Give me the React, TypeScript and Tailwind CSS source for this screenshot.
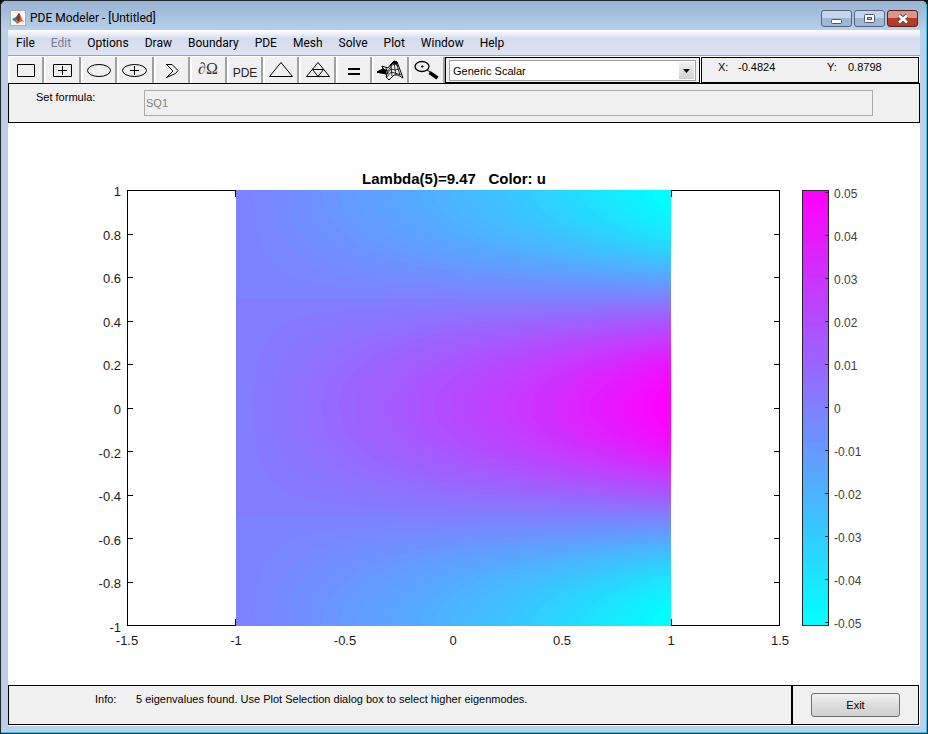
import React, { useState } from 'react';

const LEVELS = 64;
const GROWTH = 0.63;
const PLOT = 435;

const menus = ['File', 'Edit', 'Options', 'Draw', 'Boundary', 'PDE', 'Mesh', 'Solve', 'Plot', 'Window', 'Help'];
const yTicks = ['1', '0.8', '0.6', '0.4', '0.2', '0', '-0.2', '-0.4', '-0.6', '-0.8', '-1'];
const xTicks = ['-1.5', '-1', '-0.5', '0', '0.5', '1', '1.5'];
const barTicks = ['0.05', '0.04', '0.03', '0.02', '0.01', '0', '-0.01', '-0.02', '-0.03', '-0.04', '-0.05'];

// "cool" colormap, cyan to magenta
const cool = (i: number) => {
  const t = i / (LEVELS - 1);
  return `rgb(${Math.round(255 * t)},${Math.round(255 * (1 - t))},255)`;
};

// x pixel where the eigenmode reaches the given amplitude
const contourX = (amplitude: number) => {
  const x = Math.asinh(amplitude * Math.sinh(2 * GROWTH)) / GROWTH;
  return (x / 2) * PLOT;
};

// region of one lobe where |u| >= level, closed along the right edge
const lobePath = (level: number, centre: number) => {
  const half = (Math.acos(level) / Math.PI) * (PLOT / 2);
  const points: string[] = [];
  const steps = 80;
  for (let i = 0; i <= steps; i++) {
    const d = -half + (2 * half * i) / steps;
    const g = Math.cos((d / (PLOT / 2)) * Math.PI);
    const x = g <= 0 ? PLOT : contourX(Math.min(1, level / g));
    points.push(`${x.toFixed(2)},${(centre + d).toFixed(2)}`);
  }
  return `M${PLOT},${centre - half}L${points.join('L')}L${PLOT},${centre + half}Z`;
};

const Surface = () => {
  const half = LEVELS / 2;
  const steps = Array.from({ length: half - 1 }, (_, i) => i + 1);
  return (
    <g transform="translate(109 0)">
      <clipPath id="domain">
        <rect width={PLOT} height={PLOT + 1} />
      </clipPath>
      <g clipPath="url(#domain)">
        <rect width={PLOT} height={PLOT + 1} fill={cool(half - 1)} />
        <rect y={PLOT / 4} width={PLOT} height={PLOT / 2} fill={cool(half)} />
        {steps.map((n) => (
          <g key={n}>
            <path d={lobePath(n / half, 0)} fill={cool(half - 1 - n)} />
            <path d={lobePath(n / half, PLOT + 1)} fill={cool(half - 1 - n)} />
            <path d={lobePath(n / half, PLOT / 2)} fill={cool(half + n)} />
          </g>
        ))}
      </g>
    </g>
  );
};

const Plot = () => (
  <svg
    viewBox="0 0 912 562"
    className="w-full h-auto shrink-0"
    fontFamily='"Liberation Sans", Arial, sans-serif'
    role="img"
    aria-label="Lambda(5)=9.47 Color: u"
  >
    <text x="446" y="61" textAnchor="middle" fontSize="15" fontWeight="bold" style={{ whiteSpace: 'pre' }}>
      {'Lambda(5)=9.47   Color: u'}
    </text>
    <g transform="translate(119 67)">
      <g stroke="#000" fill="none" shapeRendering="crispEdges">
        <rect x="0.5" y="0.5" width="652" height="435" />
        {yTicks.map((t, i) => (
          <path key={t} d={`M0 ${Math.round(i * 43.5) + 0.5}h6M647 ${Math.round(i * 43.5) + 0.5}h6`} />
        ))}
      </g>
      <Surface />
      <path d="M108.5 0v7M108.5 429v7M544.5 0v7M544.5 429v7" stroke="#000" shapeRendering="crispEdges" />
      <g fontSize="13" fill="#1a1a1a">
        {yTicks.map((t, i) => (
          <text key={t} x="-6" y={Math.round(i * 43.6) + 6} textAnchor="end">{t}</text>
        ))}
        {xTicks.map((t, i) => (
          <text key={t} x={Math.round(i * 108.8)} y="455" textAnchor="middle">{t}</text>
        ))}
      </g>
    </g>
    <g transform="translate(794 67)">
      {Array.from({ length: LEVELS }, (_, i) => (
        <rect key={i} y={(i * 435) / LEVELS} width="26" height={i === LEVELS - 1 ? 7 : 8} fill={cool(LEVELS - 1 - i)} />
      ))}
      <rect x="0.5" y="0.5" width="26" height="435" fill="none" stroke="#262626" shapeRendering="crispEdges" />
      {barTicks.map((t, i) => (
        <g key={t}>
          <path d={`M23 ${2 + i * 43 + 0.5}h4`} stroke="#262626" shapeRendering="crispEdges" />
          <text x="32" y={8 + i * 43} fontSize="12" fill="#404040">{t}</text>
        </g>
      ))}
    </g>
  </svg>
);

const tools = [
  { name: 'Rectangle', icon: <path d="M7.5 9.5h17v12h-17z" /> },
  { name: 'Centered rectangle', icon: <path d="M6.5 9.5h18v12h-18zM11 15.5h9M15.5 11v9" /> },
  { name: 'Ellipse', icon: <ellipse cx="16" cy="15.5" rx="11.5" ry="6" /> },
  {
    name: 'Centered ellipse',
    icon: (
      <>
        <ellipse cx="15.5" cy="15.5" rx="12" ry="6" />
        <path d="M11 15.5h9M15.5 11v9" />
      </>
    ),
  },
  { name: 'Polygon', icon: <path d="M10.5 9.5H16l6 6-2.5 3-9 4L17 16z" /> },
  {
    name: 'Boundary mode',
    icon: (
      <text x="16" y="19" textAnchor="middle" fontSize="16" fontFamily='"Liberation Serif", serif' fill="#333" stroke="none">
        <tspan fontStyle="italic">∂</tspan>Ω
      </text>
    ),
  },
  {
    name: 'PDE specification',
    icon: (
      <text x="16" y="22" textAnchor="middle" fontSize="12" fill="#222" stroke="none">PDE</text>
    ),
  },
  { name: 'Initialize mesh', icon: <path d="M4.5 21.5h23L16 7.5z" /> },
  { name: 'Refine mesh', icon: <path d="M4.5 21.5h23L16 7.5zM10.5 14.5h11L16 21.5z" /> },
  { name: 'Solve PDE', icon: <path d="M10 14h12M10 19h12" strokeWidth="2" /> },
  {
    name: 'Plot solution',
    icon: (
      <>
        <path d="M3 17l6-3-1-3 6 2 4-5 2-2 3 1 2 5 4 11-5-3h-4l-5 5-3-3 1-3z" />
        <path
          d="M8 11l4 8M12 13l2 6M5 18l5-3 4 1 4-6 3-1 3 2M13 19l4-5 4 1 4-1M13 22l4-5 4 1 6 2M17 11l1 10M20 8l2 12M22 7l4 13"
          strokeWidth="0.8"
        />
        <path d="M3 17l6-3 3 1v4zM16 11l2-3 2-2 3 1v2l-4-1z" fill="#000" />
      </>
    ),
  },
  {
    name: 'Zoom',
    icon: (
      <>
        <ellipse cx="11" cy="11.5" rx="7" ry="5" strokeWidth="1.3" />
        <path d="M10.5 11h1.5v1h-1.5z" fill="#000" />
        <path d="M16 15l3 2" />
        <path d="M18.5 17.5l8 5.5" strokeWidth="3.5" />
      </>
    ),
  },
];

const Toolbar = () => (
  <div className="w-[437px] grid grid-cols-12 shrink-0">
    {tools.map((tool) => (
      <button
        key={tool.name}
        type="button"
        aria-label={tool.name}
        className="h-[26px] grid justify-items-center bg-[#f0f0f0] border-l-2 border-l-white border-r-2 border-r-[#a0a0a0]"
      >
        <svg viewBox="0 0 32 26" className="w-[32px] h-[26px]" fill="none" stroke="#000" fontFamily='"Liberation Sans", sans-serif'>
          <g transform="translate(0 -2)">{tool.icon}</g>
        </svg>
      </button>
    ))}
  </div>
);

const TitleBar = () => (
  <header className="h-[28px] shrink-0 flex items-start justify-between">
    <div className="flex items-center gap-1 pt-2 pl-[2px]">
      <svg viewBox="0 0 16 16" className="size-[16px]">
        <rect x="0.5" y="0.5" width="15" height="15" fill="#f8f8f8" stroke="#a8b0b8" />
        <path d="M2 9l4-2 2 2-3 3z" fill="#397fae" />
        <path d="M6 7l3-4v6l-2 2z" fill="#315768" />
        <path d="M9 3c2 1 2 6 5 9-2-1-3-1-4 0l-3 2c-1-2-2-2-2-2 3-1 3-6 4-9z" fill="#d95d24" />
        <path d="M9 3c1 2 1 5 0 9-1-2-2-2-2-2 1-1 1-5 2-7z" fill="#8f2b16" />
      </svg>
      <h1 className="text-[12px] leading-4 font-['Roboto',sans-serif]">PDE Modeler - [Untitled]</h1>
    </div>
    <div className="flex gap-[2px] pt-2 pr-[2px]">
      <button type="button" aria-label="Minimize" className="w-[31px] h-[17px] grid place-items-center rounded-[3px] border border-[#52677f] bg-linear-to-b from-[#c4d6ea] from-50% to-[#9db8d4] to-50%">
        <svg viewBox="0 0 12 12" className="size-3">
          <rect x="0.5" y="6.5" width="10" height="4" rx="1" fill="#fff" stroke="#535666" />
        </svg>
      </button>
      <button type="button" aria-label="Maximize" className="w-[31px] h-[17px] grid place-items-center rounded-[3px] border border-[#52677f] bg-linear-to-b from-[#c4d6ea] from-50% to-[#9db8d4] to-50%">
        <svg viewBox="0 0 12 12" className="size-3">
          <rect x="0.5" y="1.5" width="10" height="8" rx="1" fill="#fff" stroke="#535666" />
          <rect x="3.5" y="4.5" width="4" height="2" fill="#b0c4de" stroke="#535666" />
        </svg>
      </button>
      <button type="button" aria-label="Close" className="w-[31px] h-[17px] grid place-items-center rounded-[3px] border border-[#5a1d20] bg-linear-to-b from-[#dd9586] from-50% to-[#b93a24] to-50%">
        <svg viewBox="0 0 12 12" className="size-3">
          <path d="M2 2.5l8 7M10 2.5l-8 7" stroke="#535666" strokeWidth="4.5" />
          <path d="M2 2.5l8 7M10 2.5l-8 7" stroke="#fff" strokeWidth="2.5" />
        </svg>
      </button>
    </div>
  </header>
);

const App: React.FC = () => {
  const [equation, setEquation] = useState('Generic Scalar');

  return (
    <div className="bg-black">
      <div className="min-h-screen flex flex-col border border-[#23272e] border-r-[#101010] rounded-t-[6px] bg-[#b9d1ea] font-['Liberation_Sans',Arial,sans-serif] text-[11px] text-black">
        <div className="flex-1 flex flex-col pl-[7px] pr-[6px] pb-[6px] pt-px rounded-t-[6px] border-b border-r border-b-[#2fc4e4] border-r-[#2fc4e4] bg-linear-to-b from-[#98b4d2] to-[#b9d1ea] to-[30px]">
          <TitleBar />
          <nav className="h-[26px] shrink-0 flex items-center border-b border-[#a0a0a0] bg-linear-to-b from-white via-[#d5dcee] via-36% to-[#dfe4f5] font-['Roboto',sans-serif] text-[12px]">
            {menus.map((menu) => (
              <button key={menu} type="button" disabled={menu === 'Edit'} className="px-2 leading-4 disabled:text-[#7c7c84]">
                {menu}
              </button>
            ))}
          </nav>
          <div className="flex shrink-0 h-[27px] bg-white pt-px pr-px">
            <Toolbar />
            <div className="flex-1 border border-black bg-[#f0f0f0] px-[3px] pt-[2px] pb-px">
              <div className="relative h-full">
                <select
                  aria-label="Equation type"
                  value={equation}
                  onChange={(e) => setEquation(e.target.value)}
                  className="w-full h-full appearance-none bg-white border border-[#a0a0a0] pl-[3px] pt-[2px]"
                >
                  <option>Generic Scalar</option>
                  <option>Generic System</option>
                </select>
                <span className="absolute right-[2px] inset-y-[2px] w-[15px] grid place-items-center bg-linear-to-b from-[#f2f2f2] to-[#cfcfcf] pointer-events-none">
                  <svg viewBox="0 0 7 4" className="w-[7px] h-1">
                    <path d="M0 0h7L3.5 4z" />
                  </svg>
                </span>
              </div>
            </div>
            <div className="w-[218px] ml-px border border-black bg-[#f0f0f0] flex pl-4 pt-[3px] leading-3">
              <span className="w-[20px]">X:</span>
              <span className="w-[89px]">-0.4824</span>
              <span className="w-[21px]">Y:</span>
              <span>0.8798</span>
            </div>
          </div>
          <div className="h-[40px] shrink-0 flex border border-black bg-[#f0f0f0] pt-[6px] pr-[46px]">
            <label htmlFor="formula" className="w-[135px] pl-[27px] leading-[14px]">Set formula:</label>
            <input id="formula" disabled value="SQ1" className="flex-1 h-[26px] border border-[#a9a9ae] px-px text-[#808080]" />
          </div>
          <main className="flex-1 bg-white flex flex-col">
            <Plot />
          </main>
          <footer className="h-[41px] shrink-0 flex bg-white pr-px pb-px">
            <div className="flex-1 flex border border-black bg-[#f0f0f0] pl-[86px] pt-[5px] leading-4">
              <span className="w-[41px]">Info:</span>
              <span>5 eigenvalues found. Use Plot Selection dialog box to select higher eigenmodes.</span>
            </div>
            <div className="w-[127px] grid place-items-center border border-black bg-[#f0f0f0]">
              <button type="button" className="w-[89px] h-[24px] pt-px rounded-[3px] border border-[#707070] bg-linear-to-b from-[#f2f2f2] via-[#dddddd] via-50% to-[#cfcfcf]">
                Exit
              </button>
            </div>
          </footer>
        </div>
      </div>
    </div>
  );
};

export default App;
